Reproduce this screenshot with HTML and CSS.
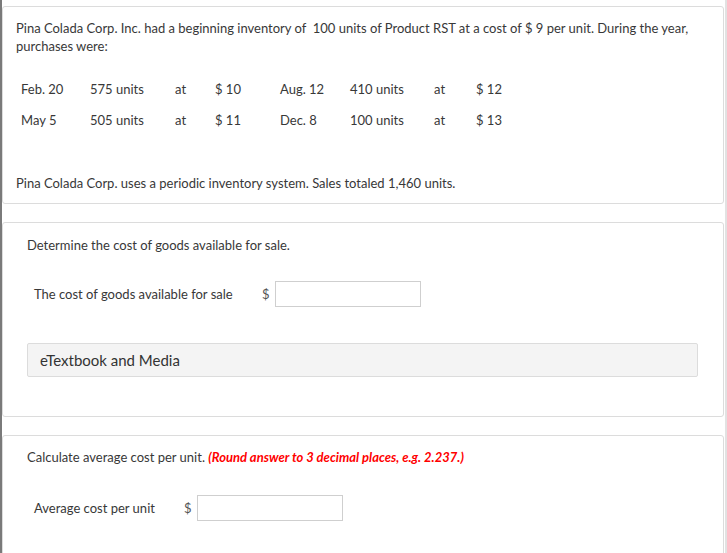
FILE: index.html
```html
<!DOCTYPE html>
<html>
<head>
<meta charset="utf-8">
<link rel="stylesheet" href="styles.css">
</head>
<body>
<div class="page">
  <section class="card card-intro">
    <p class="para">Pina Colada Corp. Inc. had a beginning inventory of &nbsp;100 units of Product RST at a cost of $ 9 per unit. During the year, purchases were:</p>
    <table class="purch">
      <tr>
        <td class="c1">Feb. 20</td><td class="c2">575 units</td><td class="c3">at</td><td class="c4">$ 10</td>
        <td class="c5">Aug. 12</td><td class="c6">410 units</td><td class="c7">at</td><td class="c8">$ 12</td>
      </tr>
      <tr>
        <td class="c1">May 5</td><td class="c2">505 units</td><td class="c3">at</td><td class="c4">$ 11</td>
        <td class="c5">Dec. 8</td><td class="c6">100 units</td><td class="c7">at</td><td class="c8">$ 13</td>
      </tr>
    </table>
    <p class="para last">Pina Colada Corp. uses a periodic inventory system. Sales totaled 1,460 units.</p>
  </section>

  <section class="card card-q1">
    <p class="q">Determine the cost of goods available for sale.</p>
    <div class="answer">
      <span class="label l1">The cost of goods available for sale</span>
      <span class="dollar">$</span>
      <span class="box"></span>
    </div>
    <div class="media">eTextbook and Media</div>
  </section>

  <section class="card card-q2">
    <p class="q">Calculate average cost per unit. <em class="hint">(Round answer to 3 decimal places, e.g. 2.237.)</em></p>
    <div class="answer a2">
      <span class="label l2">Average cost per unit</span>
      <span class="dollar">$</span>
      <span class="box"></span>
    </div>
  </section>
</div>
</body>
</html>
```

FILE: styles.css
```css
html, body {
  margin: 0;
  padding: 0;
  background: #fff;
  height: 553px;
  overflow: hidden;
}
body {
  font-family: Lato, "Open Sans", sans-serif;
  font-size: 13px;
  color: #383838;
}
.page {
  width: 723px;
  height: 600px;
  border-left: 2px solid #7a7a7a;
  border-right: 2px solid #e2e2e2;
  padding-top: 6px;
  box-sizing: content-box;
}
.card {
  margin: 0 1px 18px 0;
  border: 1px solid #dcdcdc;
  border-radius: 3px;
  background: #fff;
}
.card-intro {
  padding: 12px 14px 12px 13px;
  height: 172px;
}
.para {
  margin: 0;
  line-height: 18px;
}
.para.last {
  margin-top: 39px;
}
.purch {
  border-collapse: collapse;
  margin-top: 18px;
  margin-left: 5px;
}
.purch td {
  padding: 0;
  height: 31px;
  white-space: nowrap;
}
.c1 { width: 69px; }
.c2 { width: 85px; }
.c3 { width: 40px; }
.c4 { width: 65px; }
.c5 { width: 70px; }
.c6 { width: 84px; }
.c7 { width: 42px; }
.c8 { width: 40px; }

.card-q1 {
  padding: 13px 25px 0 24px;
  height: 180px;
}
.q {
  margin: 0;
  line-height: 18px;
}
.answer {
  display: flex;
  align-items: center;
  margin-top: 27px;
  padding-left: 7px;
}
.label.l1 { width: 228px; }
.label.l2 { width: 150px; }
.dollar {
  width: 13px;
  color: #555;
}
.box {
  display: block;
  width: 144px;
  height: 24px;
  border: 1px solid #cfcfcf;
  background: #fff;
}
.media {
  margin-top: 36px;
  height: 32px;
  line-height: 32px;
  padding-left: 12px;
  background: #f4f4f4;
  border: 1px solid #dcdcdc;
  border-radius: 2px;
  font-size: 15px;
  color: #333;
}
.card-q2 {
  padding: 12px 25px 0 24px;
  height: 200px;
}
.hint {
  color: #ff0000;
  font-weight: bold;
  font-style: italic;
}
.answer.a2 {
  margin-top: 29px;
}
```
